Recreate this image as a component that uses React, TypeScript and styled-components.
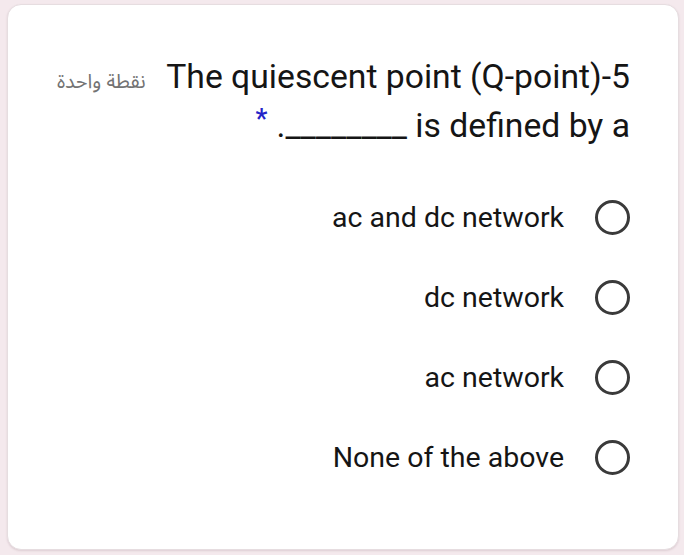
import React from "react";
import styled, { createGlobalStyle } from "styled-components";

const Global = createGlobalStyle`
  html, body {
    margin: 0;
    padding: 0;
    background: #f4e9ed;
  }
  body {
    font-family: Roboto, "Noto Sans", "DejaVu Sans", sans-serif;
  }
`;

const Page = styled.div`
  width: 684px;
  height: 555px;
  box-sizing: border-box;
  padding: 4px 5px 5px 7px;
  display: flex;
`;

const Card = styled.div`
  flex: 1;
  min-width: 0;
  background: #ffffff;
  border-radius: 14px;
  border: 1px solid #e6dde0;
  box-shadow: 0 1px 2px rgba(120, 90, 100, 0.18);
  box-sizing: border-box;
  padding: 47px 48px 50px 49px;
  display: flex;
  flex-direction: column;
`;

const Header = styled.div`
  display: flex;
  align-items: baseline;
  justify-content: space-between;
  gap: 12px;
`;

const Points = styled.span`
  font-family: "Noto Sans Arabic", "DejaVu Sans", "Noto Sans", sans-serif;
  font-size: 20px;
  color: #737373;
  white-space: nowrap;
`;

const Title = styled.div`
  flex: none;
  display: flex;
  flex-direction: column;
  align-items: flex-end;
  font-size: 33.7px;
  line-height: 49px;
  color: #151515;
`;

const TitleLine = styled.div`
  white-space: pre;
  direction: ltr;
`;

const Required = styled.span`
  color: #2424c8;
  font-size: 27px;
  font-weight: 500;
  line-height: 0;
  vertical-align: 9px;
  margin-right: 9px;
`;

const Options = styled.div`
  margin-top: 27px;
  display: flex;
  flex-direction: column;
`;

const Option = styled.label`
  height: 80px;
  display: flex;
  align-items: center;
  justify-content: flex-end;
  gap: 31px;
  font-size: 28.5px;
  color: #151515;
`;

const Radio = styled.span`
  width: 35px;
  height: 35px;
  box-sizing: border-box;
  border-radius: 50%;
  border: 3.5px solid #3a3a3a;
  flex: none;
`;

const options = ["ac and dc network", "dc network", "ac network", "None of the above"];

export default function App() {
  return (
    <>
      <Global />
      <Page>
        <Card>
          <Header>
            <Points>نقطة واحدة</Points>
            <Title>
              <TitleLine>The quiescent point (Q-point)-5</TitleLine>
              <TitleLine>
                <Required>*</Required>.________ is defined by a
              </TitleLine>
            </Title>
          </Header>
          <Options>
            {options.map((o) => (
              <Option key={o}>
                <span>{o}</span>
                <Radio />
              </Option>
            ))}
          </Options>
        </Card>
      </Page>
    </>
  );
}
